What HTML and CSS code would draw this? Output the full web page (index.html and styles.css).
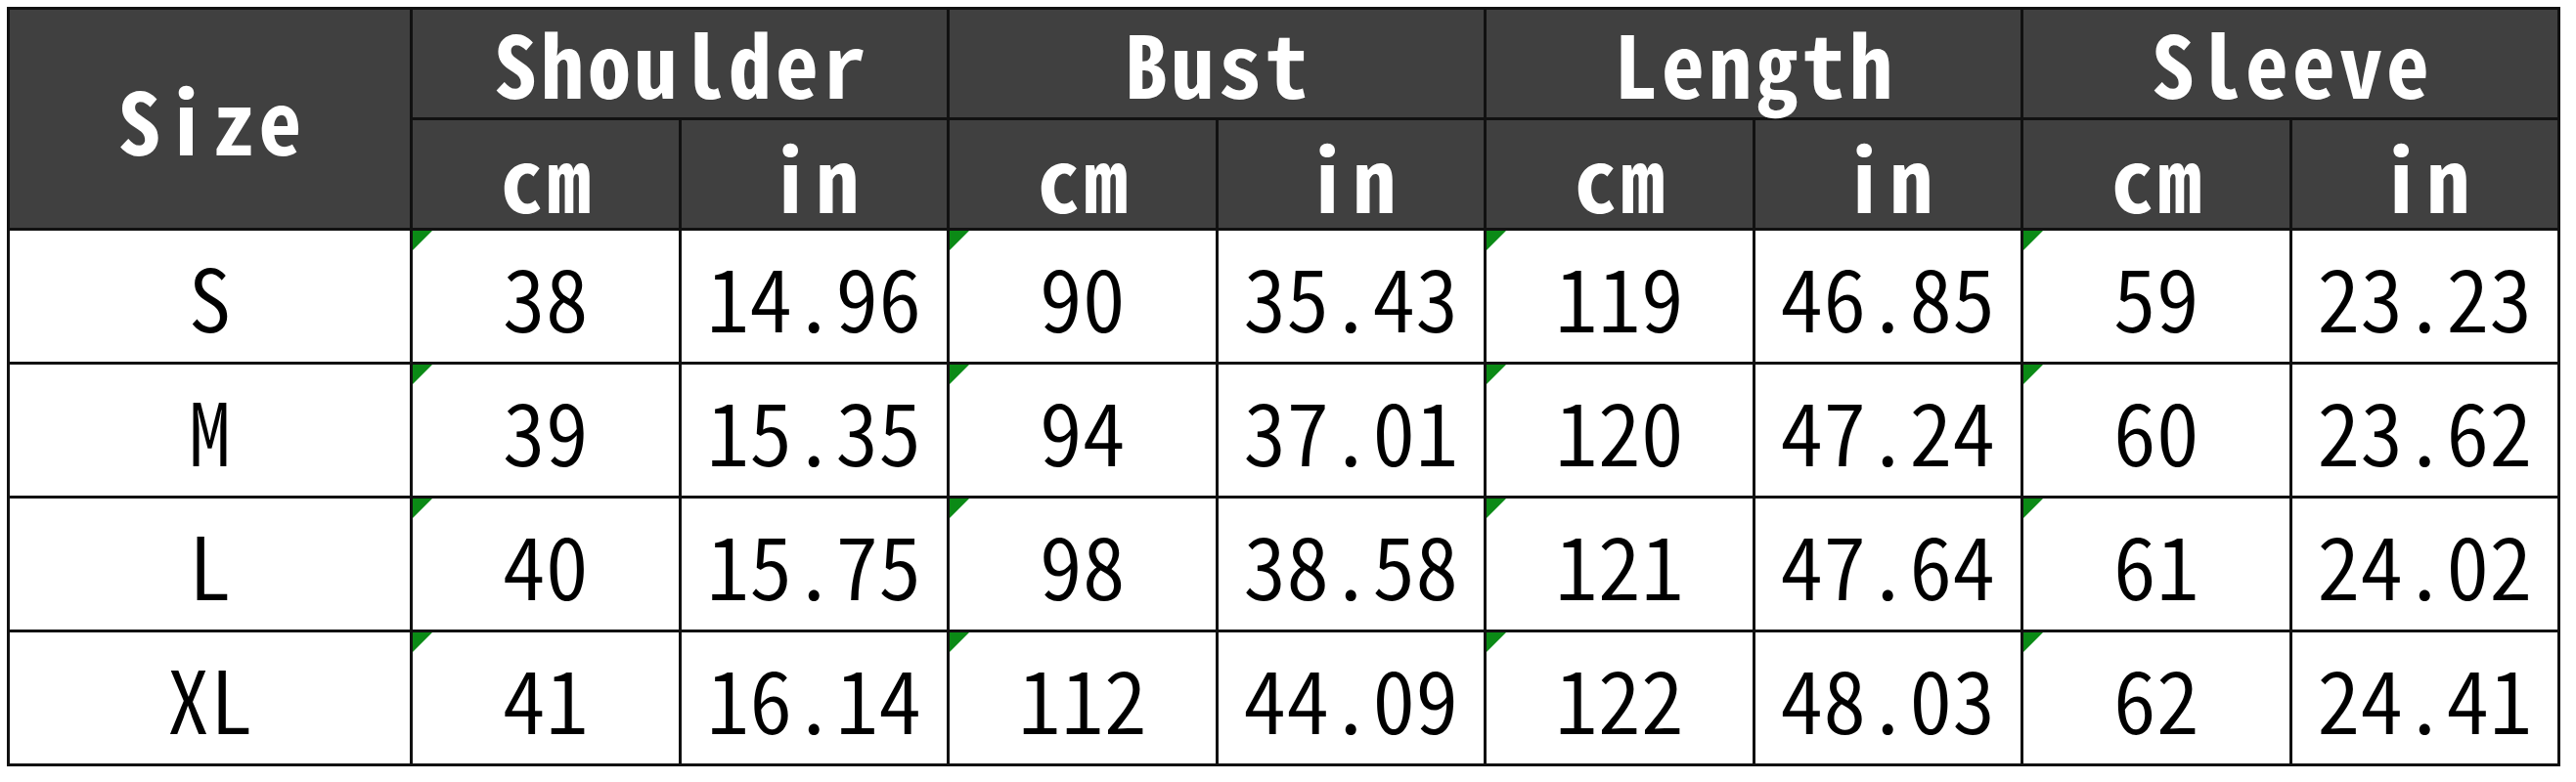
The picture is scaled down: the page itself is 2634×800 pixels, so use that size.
FILE: index.html
```html
<!DOCTYPE html>
<html>
<head>
<meta charset="utf-8">
<title>Size Chart</title>
<link rel="stylesheet" href="styles.css">
</head>
<body>
<table class="chart">
  <colgroup>
    <col class="c-size">
    <col><col><col><col><col><col><col><col>
  </colgroup>
  <thead>
    <tr class="h1">
      <th class="size-head" rowspan="2">Size</th>
      <th colspan="2">Shoulder</th>
      <th colspan="2">Bust</th>
      <th colspan="2">Length</th>
      <th colspan="2">Sleeve</th>
    </tr>
    <tr class="h2">
      <th>cm</th><th>in</th>
      <th>cm</th><th>in</th>
      <th>cm</th><th>in</th>
      <th>cm</th><th>in</th>
    </tr>
  </thead>
  <tbody>
    <tr>
      <td>S</td>
      <td class="cm">38</td><td>14.96</td>
      <td class="cm">90</td><td>35.43</td>
      <td class="cm">119</td><td>46.85</td>
      <td class="cm">59</td><td>23.23</td>
    </tr>
    <tr>
      <td>M</td>
      <td class="cm">39</td><td>15.35</td>
      <td class="cm">94</td><td>37.01</td>
      <td class="cm">120</td><td>47.24</td>
      <td class="cm">60</td><td>23.62</td>
    </tr>
    <tr>
      <td>L</td>
      <td class="cm">40</td><td>15.75</td>
      <td class="cm">98</td><td>38.58</td>
      <td class="cm">121</td><td>47.64</td>
      <td class="cm">61</td><td>24.02</td>
    </tr>
    <tr>
      <td>XL</td>
      <td class="cm">41</td><td>16.14</td>
      <td class="cm">112</td><td>44.09</td>
      <td class="cm">122</td><td>48.03</td>
      <td class="cm">62</td><td>24.41</td>
    </tr>
  </tbody>
</table>
</body>
</html>
```
FILE: styles.css
```css
html, body {
  margin: 0;
  padding: 0;
  background: #ffffff;
}

body {
  padding: 7px 0 0 7px;
}

.chart {
  border-collapse: collapse;
  table-layout: fixed;
  width: 2611px;
  font-family: "Noto Sans CJK JP", "Noto Sans", sans-serif;
  font-feature-settings: "hwid" 1;
  border: 3px solid #111111;
}

.c-size {
  width: 412px;
}

.chart th,
.chart td {
  box-sizing: border-box;
  border: 3px solid #111111;
  padding: 0;
  text-align: center;
  vertical-align: top;
  line-height: 1;
  white-space: nowrap;
}

.chart th {
  background: #404040;
  color: #ffffff;
  font-size: 88px;
  font-weight: 700;
  letter-spacing: 4px;
  padding-left: 4px;
}

.h1 th {
  height: 113px;
  padding-top: 9px;
}

.h2 th {
  height: 113px;
  padding-top: 13px;
}

.h1 th.size-head {
  padding-top: 67px;
}

.chart td {
  position: relative;
  height: 137px;
  padding-top: 22px;
  font-size: 88px;
  font-weight: 350;
  color: #000000;
  background: #ffffff;
}

.chart td.cm::before {
  content: "";
  position: absolute;
  top: 0;
  left: 0;
  width: 0;
  height: 0;
  border-top: 20px solid #0b8a16;
  border-right: 20px solid transparent;
}
```
